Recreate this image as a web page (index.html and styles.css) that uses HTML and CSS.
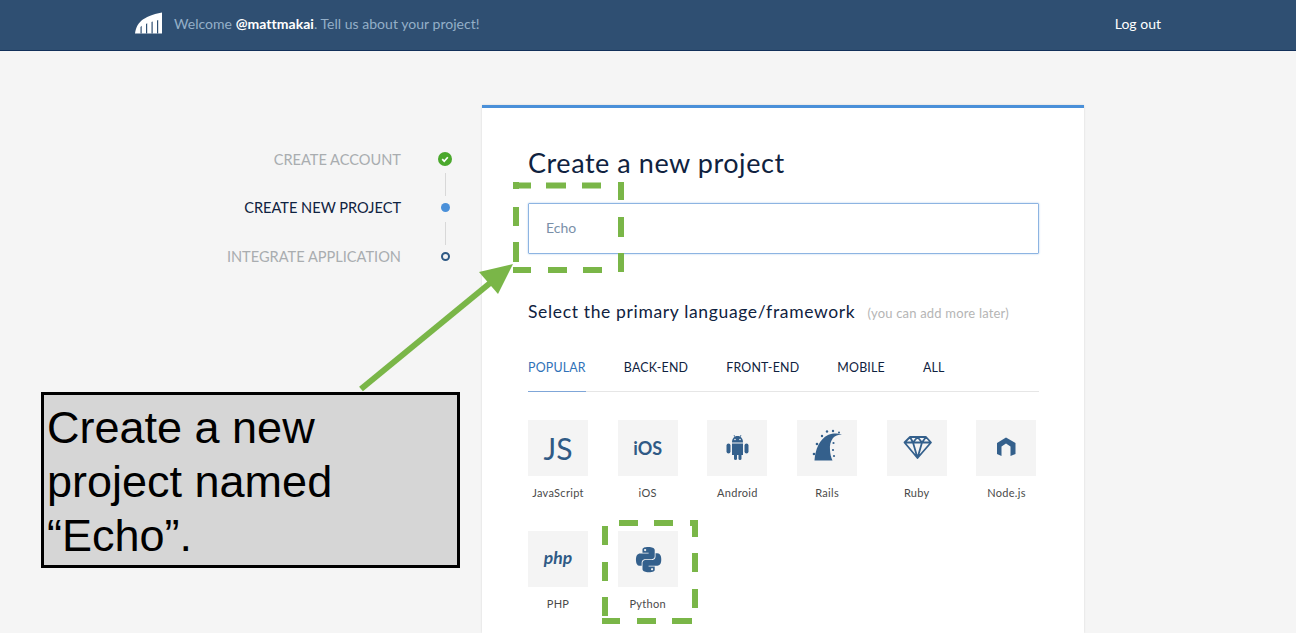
FILE: index.html
```html
<!DOCTYPE html>
<html lang="en">
<head>
    <meta charset="UTF-8">
    <meta name="viewport" content="width=device-width, initial-scale=1.0">
    <title>Create a new project</title>
    <link rel="stylesheet" href="styles.css">
</head>
<body>
    <div class="navbar">
        <svg class="logo" width="28" height="22" viewBox="0 0 28 22">
            <path fill="#fff" d="M0 21.500C1.500 11 7 4.500 27 .5V21.500z"/>
            <path fill="#2f4f72" d="M5.500 21.500V15l1.200-1.300v7.800zM11 21.500V12l1.200-.8v10.300zM16.500 21.500V10l1.200-.5v12zM22 21.500V8.500l1.200-.4v13.400z"/>
        </svg>
        <p class="welcome">Welcome <b>@mattmakai</b>. Tell us about your project!</p>
        <a class="logout" href="#">Log out</a>
    </div>

    <div class="page">
        <ul class="steps">
            <li class="step done">
                <span>CREATE ACCOUNT</span>
                <i class="dot">
                    <svg width="14" height="14" viewBox="0 0 14 14">
                        <circle cx="7" cy="7" r="7" fill="#4aa82c"/>
                        <path d="M4.200 7.200l2 2 3.600-4" fill="none" stroke="#fff" stroke-width="1.700"/>
                    </svg>
                </i>
            </li>
            <li class="step current">
                <span>CREATE NEW PROJECT</span>
                <i class="dot"><b class="dot-fill"></b></i>
            </li>
            <li class="step">
                <span>INTEGRATE APPLICATION</span>
                <i class="dot"><b class="dot-ring"></b></i>
            </li>
        </ul>

        <div class="card">
            <h1>Create a new project</h1>
            <div class="name-input">Echo</div>

            <h2>Select the primary language/framework <small>(you can add more later)</small></h2>

            <div class="tabs">
                <a class="active" href="#">POPULAR</a>
                <a href="#">BACK-END</a>
                <a href="#">FRONT-END</a>
                <a href="#">MOBILE</a>
                <a href="#">ALL</a>
            </div>

            <div class="platforms">
                <div class="platform">
                    <div class="tile js">JS</div>
                    <p>JavaScript</p>
                </div>
                <div class="platform">
                    <div class="tile ios">iOS</div>
                    <p>iOS</p>
                </div>
                <div class="platform">
                    <div class="tile">
                        <svg viewBox="0 0 60 56" width="60" height="56">
                            <path fill="#34608c" d="M25 22.500c0-4 2.200-6.500 5.500-6.500s5.500 2.500 5.500 6.500z"/>
                            <path stroke="#34608c" stroke-width=".8" d="M27 15l1 2M34 15l-1 2"/>
                            <circle cx="28" cy="19.500" r=".8" fill="#f4f4f4"/>
                            <circle cx="33" cy="19.500" r=".8" fill="#f4f4f4"/>
                            <path fill="#34608c" d="M25 23.500h11V35h-11z"/>
                            <rect x="19.500" y="23.500" width="4" height="10" rx="2" fill="#34608c"/>
                            <rect x="37.500" y="23.500" width="4" height="10" rx="2" fill="#34608c"/>
                            <rect x="27" y="33" width="3" height="7" rx="1.500" fill="#34608c"/>
                            <rect x="31.500" y="33" width="3" height="7" rx="1.500" fill="#34608c"/>
                        </svg>
                    </div>
                    <p>Android</p>
                </div>
                <div class="platform">
                    <div class="tile">
                        <svg viewBox="0 0 60 56" width="60" height="56">
                            <path fill="#34608c" d="M17.500 40.500C18 30 22.500 19 31 15c5-1.800 10-1.800 14-.5-4 .3-7 1.200-9 3.500-2.500 3.500-3.500 7-3 12 .2 4 1 7 2.500 10.500z"/>
                            <g fill="#34608c">
                                <circle cx="17" cy="34" r="1.300"/>
                                <circle cx="20" cy="24" r="1.300"/>
                                <circle cx="25" cy="16" r="1.200"/>
                                <circle cx="30" cy="11.500" r="1.200"/>
                                <circle cx="36" cy="11" r="1.200"/>
                                <circle cx="42" cy="12.500" r="1"/>
                                <circle cx="36.500" cy="23" r="1.100"/>
                                <circle cx="36" cy="30" r="1.100"/>
                                <circle cx="37" cy="36" r="1.100"/>
                            </g>
                        </svg>
                    </div>
                    <p>Rails</p>
                </div>
                <div class="platform">
                    <div class="tile">
                        <svg viewBox="0 0 60 56" width="60" height="56">
                            <path fill="none" stroke="#34608c" stroke-width="1.800" stroke-linejoin="round" d="M23 17h16l5 5.500L30.500 38 17.500 22.500zM17.500 22.500h26.500M23 17l3 5.500L30.500 17l4.500 5.500L39 17M26 22.500L30.500 38 35 22.500"/>
                        </svg>
                    </div>
                    <p>Ruby</p>
                </div>
                <div class="platform">
                    <div class="tile">
                        <svg viewBox="0 0 60 56" width="60" height="56">
                            <path fill="#34608c" d="M21 23l9-5.500 9.500 5.500v11l-5 2V26.500L30 23.500l-4.500 3V36l-4.500-2z"/>
                        </svg>
                    </div>
                    <p>Node.js</p>
                </div>
                <div class="platform">
                    <div class="tile php">php</div>
                    <p>PHP</p>
                </div>
                <div class="platform">
                    <div class="tile">
                        <svg viewBox="-18 -16 60 56" width="60" height="56">
                            <path fill="#34608c" transform="scale(1.050)" d="M14.250.18l.9.2.73.26.59.3.45.32.34.34.25.34.16.33.1.3.04.26.02.2-.01.13V8.500l-.05.63-.13.55-.21.46-.26.38-.3.31-.33.25-.35.19-.35.14-.33.1-.3.07-.26.04-.21.02H8.770l-.69.05-.59.14-.5.22-.41.27-.33.32-.27.35-.2.36-.15.37-.1.35-.07.32-.04.27-.02.21v3.060H3.170l-.21-.03-.28-.07-.32-.12-.35-.18-.36-.26-.36-.36-.35-.46-.32-.59-.28-.73-.21-.88-.14-1.050-.05-1.230.06-1.220.16-1.040.24-.87.32-.71.36-.57.4-.44.42-.33.42-.24.4-.16.36-.1.32-.05.24-.01h.16l.06.01h8.160v-.83H6.180l-.01-2.750-.02-.37.05-.34.11-.31.17-.28.25-.26.31-.23.38-.2.44-.18.51-.15.58-.12.64-.1.71-.06.77-.04.84-.02 1.270.05zm-6.300 1.980l-.23.33-.08.41.08.41.23.34.33.22.41.09.41-.09.33-.22.23-.34.08-.41-.08-.41-.23-.33-.33-.22-.41-.09-.41.09zm13.090 3.950l.28.06.32.12.35.18.36.27.36.35.35.47.32.59.28.73.21.88.14 1.040.05 1.230-.06 1.230-.16 1.040-.24.86-.32.71-.36.57-.4.45-.42.33-.42.24-.4.16-.36.09-.32.05-.24.02-.16-.01h-8.220v.82h5.840l.01 2.760.02.36-.05.34-.11.31-.17.29-.25.25-.31.24-.38.2-.44.17-.51.15-.58.13-.64.09-.71.07-.77.04-.84.01-1.270-.04-1.070-.14-.9-.2-.73-.25-.59-.3-.45-.33-.34-.34-.25-.34-.16-.33-.1-.3-.04-.25-.02-.2.01-.13v-5.340l.05-.64.13-.54.21-.46.26-.38.3-.32.33-.24.35-.2.35-.14.33-.1.3-.06.26-.04.21-.02.13-.01h5.840l.69-.05.59-.14.5-.21.41-.28.33-.32.27-.35.2-.36.15-.36.1-.35.07-.32.04-.28.02-.21V6.070h2.090l.14.01zm-6.470 14.250l-.23.33-.08.41.08.41.23.33.33.23.41.08.41-.08.33-.23.23-.33.08-.41-.08-.41-.23-.33-.33-.23-.41-.08-.41.08z"/>
                        </svg>
                    </div>
                    <p>Python</p>
                </div>
            </div>
        </div>
    </div>

    <!-- annotations drawn on top of the screenshot -->
    <svg class="marks" width="1296" height="633" viewBox="0 0 1296 633">
        <g fill="none" stroke="#7ab648" stroke-width="6">
            <path d="M513 185.500h18M546 185.500h20M582 185.500h19M621 182v18M621 217v20M621 253v19M513 270h18M548 270h19M583 270h19M516 182v7M516 207v19M516 242v20"/>
            <path d="M619 523h19M654 523h19M690 523h8M695 520v17M695 553v19M695 589v19M602 621h18M637 621h19M672 621h20M605 526v19M605 562v19M605 597v19"/>
            <path d="M361 389L495 279"/>
        </g>
        <path fill="#7ab648" d="M513 264L479 272 498 294z"/>
    </svg>

    <div class="callout">Create a new project named &ldquo;Echo&rdquo;.</div>
</body>
</html>
```

FILE: styles.css
```css
html {
    overflow: hidden;
}

body {
    font-family: Lato, "Open Sans", sans-serif;
    background-color: #f5f5f5;
    color: #0f2240;
    margin: 0;
    padding: 0;
    height: 633px;
    overflow: hidden;
    position: relative;
}

.navbar {
    height: 50px;
    background-color: #2f4f72;
    border-bottom: 1px solid #12305a;
    display: flex;
    align-items: center;
    padding: 0 135px;
}
.logo {
    margin-top: -5px;
    flex-shrink: 0;
}
.welcome {
    margin: 0 0 3px 11px;
    font-size: 14px;
    letter-spacing: 0.03px;
    color: #94afc8;
}
.welcome b {
    color: #fff;
}
.logout {
    margin: 0 0 3px auto;
    color: #fff;
    font-size: 14px;
    text-decoration: none;
}

.page {
    display: flex;
    align-items: flex-start;
    padding-top: 54px;
}

.steps {
    width: 482px;
    box-sizing: border-box;
    list-style: none;
    margin: 45.500px 0 0;
    padding: 0 28px 0 0;
}
.step {
    display: flex;
    justify-content: flex-end;
    align-items: center;
    gap: 35px;
    height: 17px;
    margin-bottom: 31.500px;
    font-size: 14.600px;
    color: #a9adb0;
    position: relative;
}
.step.current {
    color: #0f2240;
}
.step + .step::before {
    content: "";
    position: absolute;
    right: 8px;
    top: -26px;
    height: 23px;
    width: 1px;
    background-color: #d8d8d8;
}
.dot {
    width: 18px;
    display: flex;
    justify-content: center;
}
.dot-fill {
    width: 9px;
    height: 9px;
    border-radius: 50%;
    background-color: #4a90d9;
}
.dot-ring {
    width: 5px;
    height: 5px;
    border: 2px solid #2f5a85;
    border-radius: 50%;
}

.card {
    width: 602px;
    height: 528px;
    overflow: hidden;
    box-sizing: border-box;
    background-color: #fff;
    border-top: 3px solid #4a90d9;
    box-shadow: 0 0 2px rgba(0, 0, 0, 0.12);
    padding: 37px 45px 0 46px;
}
h1 {
    margin: 0 0 22px;
    font-size: 27px;
    line-height: 36px;
    font-weight: 400;
    letter-spacing: 0.55px;
}
.name-input {
    height: 49px;
    line-height: 48px;
    border: 1px solid #8db4e2;
    box-shadow: 0 0 2px #a9c8ec;
    padding-left: 17px;
    font-size: 14px;
    color: #7a8fa8;
    border-radius: 1px;
}
h2 {
    margin: 46px 0 0;
    font-size: 17.500px;
    line-height: 24px;
    font-weight: 400;
    letter-spacing: 0.65px;
}
h2 small {
    margin-left: 7px;
    font-size: 13px;
    letter-spacing: 0.18px;
    color: #b5b5b5;
}

.tabs {
    display: flex;
    gap: 38px;
    margin-top: 35px;
    border-bottom: 1px solid #e6e6e6;
    font-size: 12.400px;
}
.tabs a {
    color: #0f2240;
    text-decoration: none;
    padding-bottom: 15px;
    line-height: 16px;
    margin-bottom: -1px;
    letter-spacing: 0.2px;
}
.tabs a.active {
    color: #2f72b8;
    border-bottom: 1px solid #7fa6d8;
}

.platforms {
    display: grid;
    grid-template-columns: repeat(6, 60px);
    column-gap: 29.700px;
    margin-top: 28px;
}
.platform {
    height: 111px;
}
.platform p {
    margin: 10px -15px 0;
    text-align: center;
    font-size: 11px;
    line-height: 14px;
    letter-spacing: 0.3px;
    color: #4a4a4a;
}
.tile {
    width: 60px;
    height: 56px;
    background-color: #f4f4f4;
    display: flex;
    align-items: center;
    justify-content: center;
    color: #2f5a85;
}
.tile.js {
    font-size: 30px;
}
.tile.ios {
    font-size: 18px;
    font-weight: 700;
}
.tile.php {
    font-size: 17.500px;
    font-weight: 700;
    font-style: italic;
    padding-bottom: 3px;
    box-sizing: border-box;
}

.marks {
    position: absolute;
    top: 0;
    left: 0;
    pointer-events: none;
}
.callout {
    position: absolute;
    left: 41px;
    top: 392px;
    width: 350px;
    height: 164px;
    border: 3px solid #000;
    background-color: #d6d6d6;
    color: #000;
    font-family: "Liberation Sans", Arial, sans-serif;
    font-size: 45px;
    line-height: 54px;
    padding: 6px 60px 0 3px;
}
```
